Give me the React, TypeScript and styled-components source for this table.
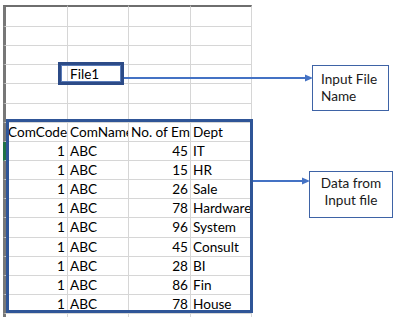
import React from "react";
import styled, { createGlobalStyle } from "styled-components";

const GlobalStyle = createGlobalStyle`
  html, body {
    margin: 0;
    padding: 0;
    background: #ffffff;
  }
  * {
    box-sizing: border-box;
  }
`;

const Page = styled.div`
  position: relative;
  display: flex;
  width: 400px;
  height: 317px;
  overflow: hidden;
  font-family: Lato, "Liberation Sans", sans-serif;
  color: #000;
`;

const SheetArea = styled.div`
  padding: 5px 0 0 3px;
`;

const Sheet = styled.div`
  display: grid;
  grid-template-columns: 65px 61px 62px 61px;
  grid-template-rows: 22px repeat(16, 19.15px);
`;

const Cell = styled.div<{
  $right?: boolean;
  $first?: boolean;
  $top?: boolean;
  $active?: boolean;
  $last?: boolean;
}>`
  display: flex;
  align-items: center;
  justify-content: ${({ $right }) => ($right ? "flex-end" : "flex-start")};
  padding: 0 2px;
  font-size: 13.6px;
  white-space: nowrap;
  overflow: hidden;
  border-right: 1px solid
    ${({ $active, $last }) => ($active && $last ? "#2b7a3b" : "#d6d6d6")};
  border-bottom: 1px solid #d6d6d6;
  border-top: ${({ $top }) => ($top ? "2px solid #6e6e6e" : "none")};
  border-left: ${({ $first, $active }) =>
    $first ? `3px solid ${$active ? "#217346" : "#777777"}` : "none"};
`;

const FileBox = styled.div`
  position: absolute;
  left: 58px;
  top: 62px;
  width: 66px;
  height: 23px;
  border: 3px solid #2c4b87;
  box-shadow: inset 0 0 0 1px #5a7bb8;
`;

const SelectionFrame = styled.div`
  position: absolute;
  left: 6px;
  top: 119px;
  width: 247px;
  height: 194px;
  border: 3px solid #2f5597;
`;

const Annotations = styled.div`
  display: flex;
  flex-direction: column;
  align-items: flex-start;
  padding: 65px 0 0 60px;
`;

const Callout = styled.div<{ $width: number; $center?: boolean }>`
  width: ${({ $width }) => $width}px;
  height: 46px;
  border: 1px solid #3e63a6;
  background: #fff;
  padding: ${({ $center }) => ($center ? "3px 0 0" : "5px 0 0 8px")};
  text-align: ${({ $center }) => ($center ? "center" : "left")};
  font-size: 13.6px;
  line-height: 17px;
  color: #1a1a1a;
`;

const DataCallout = styled(Callout)`
  margin-top: 60px;
  margin-left: -3px;
  height: 47px;
`;

const Connectors = styled.svg`
  position: absolute;
  left: 0;
  top: 0;
  pointer-events: none;
`;

const header = ["ComCode", "ComName", "No. of Employees", "Dept"];
const data: [number, string, number, string][] = [
  [1, "ABC", 45, "IT"],
  [1, "ABC", 15, "HR"],
  [1, "ABC", 26, "Sale"],
  [1, "ABC", 78, "Hardware"],
  [1, "ABC", 96, "System"],
  [1, "ABC", 45, "Consult"],
  [1, "ABC", 28, "BI"],
  [1, "ABC", 86, "Fin"],
  [1, "ABC", 78, "House"],
];

type Row = { values: (string | number)[]; kind: "blank" | "header" | "data" };

const rows: Row[] = [
  { values: ["", "", "", ""], kind: "blank" },
  { values: ["", "", "", ""], kind: "blank" },
  { values: ["", "", "", ""], kind: "blank" },
  { values: ["", "File1", "", ""], kind: "blank" },
  { values: ["", "", "", ""], kind: "blank" },
  { values: ["", "", "", ""], kind: "blank" },
  { values: header, kind: "header" },
  ...data.map((d) => ({ values: d, kind: "data" as const })),
  { values: ["", "", "", ""], kind: "blank" },
];

export default function App() {
  return (
    <>
      <GlobalStyle />
      <Page>
        <SheetArea>
          <Sheet>
            {rows.map((row, r) =>
              row.values.map((v, c) => (
                <Cell
                  key={`${r}-${c}`}
                  $first={c === 0}
                  $last={c === 3}
                  $top={r === 0}
                  $active={r === 7}
                  $right={row.kind === "data" && typeof v === "number"}
                >
                  {v}
                </Cell>
              ))
            )}
          </Sheet>
        </SheetArea>
        <FileBox />
        <SelectionFrame />
        <Annotations>
          <Callout $width={77}>
            Input File
            <br />
            Name
          </Callout>
          <DataCallout $width={84} $center>
            Data from
            <br />
            Input file
          </DataCallout>
        </Annotations>
        <Connectors width={400} height={317}>
          <line x1={124} y1={78} x2={307} y2={78} stroke="#4472c4" strokeWidth={2} />
          <polygon points="313,78 305,74.5 305,81.5" fill="#4472c4" />
          <line x1={253} y1={181} x2={304} y2={181} stroke="#4472c4" strokeWidth={2} />
          <polygon points="310,181 302,177.5 302,184.5" fill="#4472c4" />
        </Connectors>
      </Page>
    </>
  );
}
